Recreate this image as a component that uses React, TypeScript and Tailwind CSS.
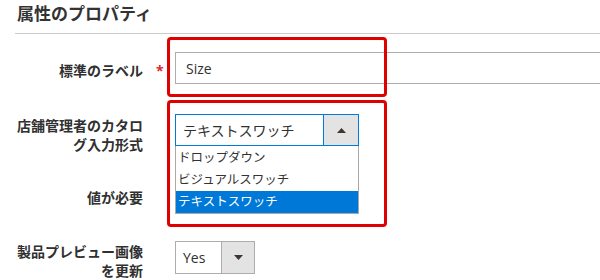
import React from 'react';

const font = { fontFamily: '"Open Sans", "Noto Sans CJK JP", sans-serif' };

function Caret({ up }: { up?: boolean }) {
  return (
    <svg width="9" height="5" viewBox="0 0 9 5" className="text-[#41362f]">
      {up ? <path d="M0 5 L4.5 0 L9 5 Z" fill="currentColor" /> : <path d="M0 0 L4.5 5 L9 0 Z" fill="currentColor" />}
    </svg>
  );
}

export default function App() {
  const options = ['ドロップダウン', 'ビジュアルスワッチ', 'テキストスワッチ'];

  return (
    <div className="relative h-[280px] w-[600px] overflow-hidden bg-white text-[#303030]" style={font}>
      {/* Section title */}
      <div className="ml-[15px] h-[34px] border-b border-[#cccccc] pl-[2px] pt-[1px]">
        <h2 className="text-[17px] font-bold leading-[26px] text-[#333333]">属性のプロパティ</h2>
      </div>

      {/* Default label */}
      <div className="mt-[18px] flex items-center">
        <div className="w-[143px] shrink-0 pt-[4px] text-right text-[14px] font-bold leading-[19px]">標準のラベル</div>
        <div className="w-[32px] shrink-0 pl-[13px] pt-[4px] text-[14px] font-bold text-[#e22626]">*</div>
        <div className="flex h-[32px] w-[445px] shrink-0 items-center border border-[#adadad] pl-[10px] text-[14px]">Size</div>
      </div>

      {/* Catalog input type */}
      <div className="mt-[30px] flex items-start">
        <div className="w-[143px] shrink-0 pt-[2px] text-right text-[14px] font-bold leading-[19px]">
          店舗管理者のカタロ
          <br />
          グ入力形式
        </div>
        <div className="relative ml-[32px]">
          <div className="flex h-[32px] w-[184px] border border-[#007bdb]">
            <div className="flex flex-1 items-center pl-[7px] text-[14px] text-[#303030]">テキストスワッチ</div>
            <div className="flex w-[35px] items-center justify-center border-l border-[#007bdb] bg-[#e3e3e3]">
              <Caret up />
            </div>
          </div>
          <ul className="absolute left-0 top-full z-10 w-[184px] border-x border-b border-[#a9a9a9] bg-white pt-[1px]">
            {options.map((o, i) => (
              <li
                key={o}
                className={`flex h-[22px] items-center pl-[2px] pt-[1px] text-[12.5px] ${
                  i === 2 ? 'bg-[#0078d7] text-white' : 'text-[#333333]'
                }`}
              >
                {o}
              </li>
            ))}
          </ul>
        </div>
      </div>

      {/* Values required */}
      <div className="mt-[27px] flex h-[32px] items-center">
        <div className="w-[143px] shrink-0 text-right text-[14px] font-bold leading-[19px]">値が必要</div>
      </div>

      {/* Update product preview image */}
      <div className="mt-[28px] flex items-start">
        <div className="w-[143px] shrink-0 pt-[1px] text-right text-[14px] font-bold leading-[19px]">
          製品プレビュー画像
          <br />
          を更新
        </div>
        <div className="ml-[32px] flex h-[33px] w-[80px] border border-[#adadad]">
          <div className="flex flex-1 items-center pl-[7px] text-[14px]">Yes</div>
          <div className="flex w-[33px] items-center justify-center border-l border-[#adadad] bg-[#e3e3e3]">
            <Caret />
          </div>
        </div>
      </div>

      {/* Red annotation boxes */}
      <div className="pointer-events-none absolute left-[167px] top-[37px] h-[60px] w-[220px] rounded-[4px] border-[3px] border-[#e00000]" />
      <div className="pointer-events-none absolute left-[167px] top-[100px] h-[127px] w-[220px] rounded-[4px] border-[3px] border-[#e00000]" />
    </div>
  );
}
